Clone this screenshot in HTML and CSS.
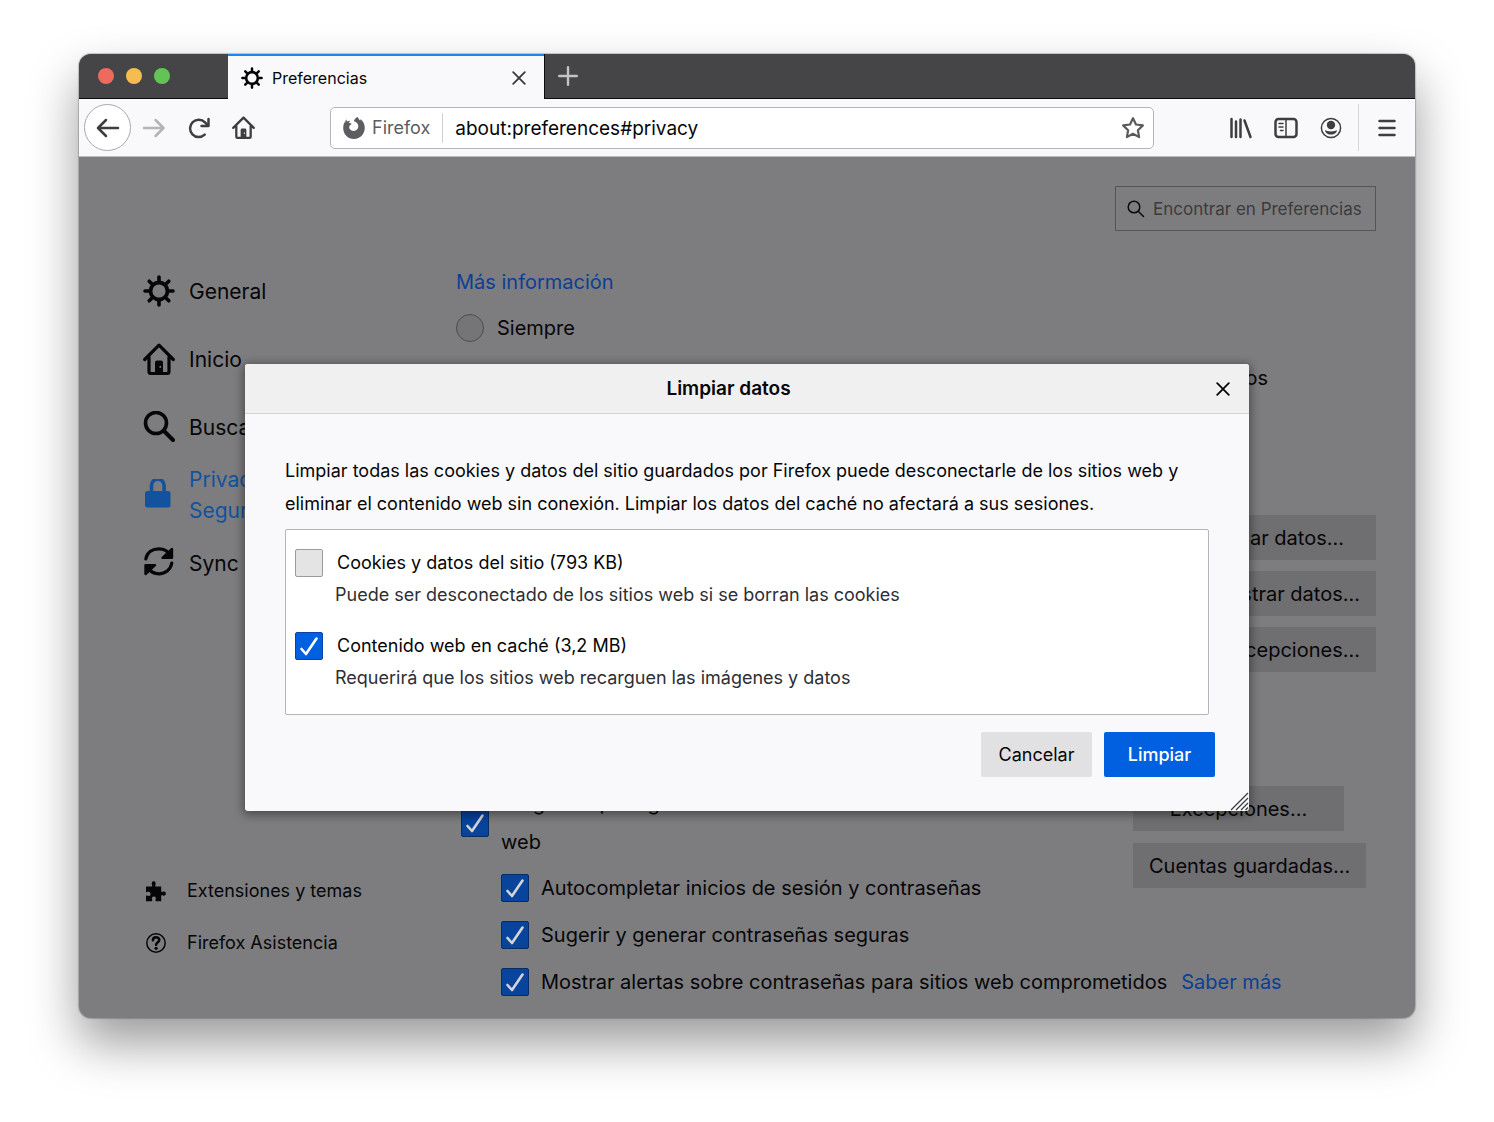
FILE: index.html
```html
<!DOCTYPE html>
<html lang="es">
<head>
<meta charset="utf-8">
<meta name="viewport" content="width=device-width, initial-scale=1">
<title>Preferencias</title>
<link rel="stylesheet" href="styles.css">
</head>
<body>
<svg class="defs" aria-hidden="true">
  <symbol id="gear" viewBox="0 0 32 32">
    <g fill="none" stroke="currentColor" stroke-linecap="round">
      <circle cx="16" cy="16" r="8.5" stroke-width="3.8"/>
      <path stroke-width="3.6" d="M16 2v4M16 26v4M2 16h4M26 16h4M6.2 6.2l2.6 2.6M23.2 23.2l2.6 2.6M6.2 25.8l2.6-2.6M23.2 8.8l2.6-2.6"/>
    </g>
  </symbol>
  <symbol id="home" viewBox="0 0 32 32">
    <path fill="none" stroke="currentColor" stroke-width="3.2" stroke-linecap="round" stroke-linejoin="round" d="M1.7 16.5L16 2.200l14.300 14.300M6 14v14.500q0 2 2 2h16q2 0 2-2V14"/>
    <path fill="currentColor" fill-rule="evenodd" d="M12 30V19.500q0-2 2-2h4q2 0 2 2V30zM16.500 23h1.600v1.800h-1.600z"/>
  </symbol>
  <symbol id="close" viewBox="0 0 14 14">
    <path fill="none" stroke="currentColor" stroke-width="1.800" stroke-linecap="round" d="M1.200 1.200l11.600 11.600M12.800 1.200L1.200 12.800"/>
  </symbol>
</svg>

<div class="window">
  <div class="tabbar">
    <div class="lights"><i class="light red"></i><i class="light yellow"></i><i class="light green"></i></div>
    <div class="tab">
      <svg class="tab-icon"><use href="#gear"/></svg>
      <span class="tab-title">Preferencias</span>
      <button class="plain tab-close" aria-label="Cerrar pestaña"><svg class="x-icon"><use href="#close"/></svg></button>
    </div>
    <button class="plain new-tab" aria-label="Nueva pestaña"><svg width="20" height="20" viewBox="0 0 20 20"><path fill="none" stroke="currentColor" stroke-width="2.400" stroke-linecap="round" d="M10 1.200v17.600M1.200 10h17.600"/></svg></button>
  </div>

  <div class="toolbar">
    <button class="plain tool back" aria-label="Atrás"><svg width="24" height="24" viewBox="0 0 24 24"><path d="M22 12H3M10 4L2 12l8 8"/></svg></button>
    <button class="plain tool forward" aria-label="Adelante"><svg width="24" height="24" viewBox="0 0 24 24"><path d="M2 12h19M13.500 4l8 8-8 8"/></svg></button>
    <button class="plain tool" aria-label="Recargar"><svg width="24" height="24" viewBox="0 0 24 24"><path d="M17.700 18.700A8.700 8.700 0 1 1 18 6.300l2.500 2.500"/><path d="M21.500 3v7h-7"/></svg></button>
    <button class="plain tool" aria-label="Inicio"><svg width="23" height="23"><use href="#home"/></svg></button>
    <div class="urlbar">
      <svg class="brand" width="24" height="24" viewBox="0 0 24 24"><path fill="currentColor" d="M4.300 3.200c.1 1 .4 1.700 1 2.300.8-.7 2-1 3-.8-.8.600-1.200 1.300-1.200 2.200.7.200 1.600.2 2.400.5-.1 1-1 1.500-1.800 2-.7 1.100-.6 2.700.3 3.800 1.900 2.400 5.700 2.200 7.400-.2 1.700-2.500.9-5.600-1.600-7.100-.7-.4-1.300-.6-2-.6.700-2.200 2.100-3.700 4.100-4.300.3 1.500 1.200 2.500 2.300 3.600.3-.4.300-.9.200-1.500 2.700 2.100 4.400 5.200 4.400 8.700C22.800 18 18.200 23 12 23S1.200 18.200 1.200 12c0-2.200.5-4.100 1.500-5.900l.3 1c.1-1.500.5-2.800 1.300-3.900z"/></svg>
      <span class="brand-name">Firefox</span>
      <input class="address" type="text" value="about:preferences#privacy" aria-label="Dirección">
      <button class="plain star" aria-label="Añadir a marcadores"><svg width="24" height="24" viewBox="0 0 24 24"><path fill="none" stroke="currentColor" stroke-width="2.200" stroke-linejoin="round" d="M12 2.200l3 6.300 6.900.9-5 4.800 1.200 6.900L12 17.800l-6.100 3.300 1.200-6.900-5-4.800 6.900-.9z"/></svg></button>
    </div>
    <button class="plain tool" aria-label="Biblioteca"><svg width="24" height="24" viewBox="0 0 24 24"><path d="M2.500 3v18M7 5.500V21M11.500 3.500V21M15.500 4.500L21.500 21"/></svg></button>
    <button class="plain tool" aria-label="Barra lateral"><svg width="24" height="24" viewBox="0 0 24 24"><rect x="1.500" y="3" width="21" height="18" rx="3"/><path class="thin" d="M12 3v18M5 7.500h4M5 11h4M6.500 14.500H9"/></svg></button>
    <button class="plain tool" aria-label="Cuenta"><svg width="22" height="22" viewBox="0 0 22 22"><circle class="thin" cx="11" cy="11" r="9.600"/><circle class="solid" cx="11" cy="8" r="4.200"/><path class="solid" d="M5 13.200c1 .1 3 1.300 6 1.300s5-1.200 6-1.300c0 2-2.400 4.300-6 4.300s-6-2.300-6-4.300z"/></svg></button>
    <button class="plain tool menu" aria-label="Menú"><svg width="18" height="18" viewBox="0 0 18 18"><path d="M1.500 2h15M1.500 9h15M1.500 16h15"/></svg></button>
  </div>

  <div class="page">
    <nav class="sidebar">
      <a class="category" href="#general"><svg class="cat-icon"><use href="#gear"/></svg><span>General</span></a>
      <a class="category" href="#home-pane"><svg class="cat-icon"><use href="#home"/></svg><span>Inicio</span></a>
      <a class="category" href="#search"><svg class="cat-icon" viewBox="0 0 32 32"><g fill="none" stroke="currentColor" stroke-linecap="round"><circle cx="13" cy="12" r="10.500" stroke-width="3.600"/><path stroke-width="4" d="M21 20l9 9"/></g></svg><span>Buscar</span></a>
      <a class="category selected" href="#privacy"><svg class="cat-icon" viewBox="0 0 32 32"><path fill="none" stroke="currentColor" stroke-width="3.600" d="M8.500 14V6.500a6.300 6.300 0 0 1 12.600 0V14"/><rect fill="currentColor" x="2" y="12" width="25.500" height="16.500" rx="2.500"/></svg><span>Privacidad y<br>Seguridad</span></a>
      <a class="category" href="#sync"><svg class="cat-icon" viewBox="0 0 32 32"><g fill="none" stroke="currentColor" stroke-width="3.200" stroke-linecap="round" stroke-linejoin="round"><path d="M2.800 12C4 5 9.500 1.800 16 1.800c5 0 9 2.700 11 6.200"/><path d="M28.800 16C27.600 23 22 26.800 16 26.800c-5 0-9-2.700-11-6.200"/><path d="M29 2v8.800h-9.500zM2.500 27v-8.800H12z" fill="currentColor" stroke-width="2.400"/></g></svg><span>Sync</span></a>
      <div class="sidebar-foot">
        <a class="support" href="#addons"><svg width="22" height="22" viewBox="0 0 22 22"><path fill="currentColor" d="M1 6.500h5.500q1 0 .7-1C6.300 3.600 6.700 1.200 8.700 1.200s2.400 2.400 1.500 4.300q-.3 1 .7 1h5.300v4.700q0 1 1 .7c1.700-.9 3.700-.4 3.700 1.700s-2 2.600-3.700 1.700q-1-.3-1 .7v5.300h-5q-1 0-.7-1c1-1.800.3-3.700-1.600-3.700s-2.600 1.900-1.600 3.700q.3 1-.7 1H1v-5q0-1 1-.7c1.700 1 3.600.3 3.600-1.600S3.700 11.100 2 12.100q-1 .3-1-.7z"/></svg><span>Extensiones y temas</span></a>
        <a class="support" href="#help"><svg width="22" height="22" viewBox="0 0 22 22"><g fill="none" stroke="currentColor"><circle cx="11" cy="11" r="9.200" stroke-width="1.500"/><path stroke-width="2.500" stroke-linecap="round" d="M7.900 8.300c0-4.200 6.400-4 6.400-.3 0 2.200-3.200 2.200-3.200 4.800"/></g><circle fill="currentColor" cx="11.100" cy="16.300" r="1.600"/></svg><span>Firefox Asistencia</span></a>
      </div>
    </nav>

    <main class="content">
      <label class="search"><svg width="18" height="18" viewBox="0 0 18 18"><g fill="none" stroke="#0c0c0d" stroke-width="1.500" stroke-linecap="round"><circle cx="7" cy="7" r="5.800"/><path d="M11.200 11.200l5.300 5.300"/></g></svg><input type="text" placeholder="Encontrar en Preferencias" aria-label="Encontrar en Preferencias"></label>

      <section class="tracking">
        <a class="link" href="#more">Más información</a>
        <label class="option"><input class="radio" type="radio" name="dnt"><span>Siempre</span></label>
        <label class="option"><input class="radio" type="radio" name="dnt"><span>Solo cuando Firefox esté configurado para bloquear a los rastreadores conocidos</span></label>
      </section>

      <section class="site-data">
        <button class="btn clear">Limpiar datos...</button>
        <button class="btn">Administrar datos...</button>
        <button class="btn">Administrar excepciones...</button>
      </section>

      <section class="logins">
        <div class="login-options">
          <label class="ask"><input class="check" type="checkbox" checked><span>Preguntar para guardar contraseñas de sitios<br>web</span></label>
          <label class="sub"><input class="check" type="checkbox" checked><span>Autocompletar inicios de sesión y contraseñas</span></label>
          <label class="sub"><input class="check" type="checkbox" checked><span>Sugerir y generar contraseñas seguras</span></label>
        </div>
        <div class="login-buttons">
          <button class="btn">Excepciones...</button>
          <button class="btn saved">Cuentas guardadas...</button>
        </div>
        <div class="sub alerts"><label class="sub-label"><input class="check" type="checkbox" checked><span>Mostrar alertas sobre contraseñas para sitios web comprometidos</span></label><a class="link" href="#learn">Saber más</a></div>
      </section>
    </main>

    <div class="overlay">
      <div class="dialog" role="dialog" aria-labelledby="dialog-title">
        <header class="dialog-head">
          <h1 id="dialog-title">Limpiar datos</h1>
          <button class="plain dialog-close" aria-label="Cerrar"><svg class="x-icon"><use href="#close"/></svg></button>
        </header>
        <div class="dialog-body">
          <p class="intro">Limpiar todas las cookies y datos del sitio guardados por Firefox puede desconectarle de los sitios web y eliminar el contenido web sin conexión. Limpiar los datos del caché no afectará a sus sesiones.</p>
          <div class="choices">
            <div class="choice">
              <label><input class="check" type="checkbox"><span>Cookies y datos del sitio (793 KB)</span></label>
              <p>Puede ser desconectado de los sitios web si se borran las cookies</p>
            </div>
            <div class="choice">
              <label><input class="check" type="checkbox" checked><span>Contenido web en caché (3,2 MB)</span></label>
              <p>Requerirá que los sitios web recarguen las imágenes y datos</p>
            </div>
          </div>
        </div>
        <footer class="dialog-foot">
          <button class="action">Cancelar</button>
          <button class="action primary">Limpiar</button>
        </footer>
        <svg class="grip" width="20" height="20" viewBox="0 0 20 20"><path fill="none" stroke="#3a3a3c" stroke-width="1.200" d="M2 19L19 2M7 19L19 7M12 19l7-7M16.500 19l2.500-2.500"/></svg>
      </div>
    </div>
  </div>
</div>
</body>
</html>
```
FILE: styles.css
```css
* { box-sizing: border-box; }

body {
  margin: 0;
  padding: 54px 79px 104px;
  background: #fff;
  color: #060607;
  font-family: Inter, "Liberation Sans", sans-serif;
  font-size: 20px;
  line-height: 30px;
}

button, input { font: inherit; color: inherit; }
a { color: inherit; text-decoration: none; }
p, h1 { margin: 0; }
svg { flex: none; display: block; }
.defs { position: absolute; width: 0; height: 0; }
.plain { border: 0; padding: 0; background: none; display: flex; align-items: center; justify-content: center; }

.window {
  border-radius: 12px;
  overflow: hidden;
  background: #7d7d7f;
  box-shadow: 0 0 1px 1px rgba(0, 0, 0, .2), 0 25px 50px rgba(0, 0, 0, .4);
}

/* Tab strip */
.tabbar { display: flex; height: 45px; background: #454547; }
.lights { display: flex; align-items: center; gap: 12px; width: 149px; padding-left: 19px; border-bottom: 1px solid #0c0c0d; }
.light { width: 16px; height: 16px; border-radius: 50%; }
.red { background: #ee6a5f; }
.yellow { background: #f5bd4f; }
.green { background: #61c454; }
.tab { display: flex; align-items: center; width: 316px; padding: 0 16px 0 13px; background: #f9f9fb; border-top: 2px solid #1f84e8; }
.tab-icon { width: 22px; height: 22px; }
.tab-title { flex: 1; padding-left: 9px; font-size: 16px; }
.x-icon { width: 14px; height: 14px; }
.tab-close { width: 18px; height: 18px; color: #38383d; }
.new-tab { flex: 1; justify-content: flex-start; padding-left: 13px; color: #c4c4c6; border-left: 1px solid #0c0c0d; border-bottom: 1px solid #0c0c0d; }

/* Navigation toolbar */
.toolbar { display: flex; align-items: center; height: 58px; padding-left: 5px; background: #f9f9fb; border-bottom: 1px solid #bdbdbf; color: #3e3e42; }
.tool { width: 45px; height: 47px; flex: none; }
.tool svg { fill: none; stroke: currentColor; stroke-width: 2.5px; stroke-linecap: round; stroke-linejoin: round; }
.tool use { stroke: none; }
.tool .thin { stroke-width: 1.5px; }
.tool .solid { fill: currentColor; stroke: none; }
.back { width: 47px; border: 1px solid #a9a9ad; border-radius: 50%; background: #fff; }
.forward { color: #b4b4b8; }
.menu { width: 57px; margin-left: 5px; border-left: 1px solid #d7d7db; }
.urlbar { flex: 1; display: flex; align-items: center; height: 42px; margin: 0 64px; padding: 0 8px 0 11px; border: 1px solid #b5b5b9; border-radius: 5px; background: #fff; }
.brand { color: #5d5d61; }
.brand-name { padding: 0 12px 0 6px; font-size: 18px; color: #5d5d61; border-right: 1px solid #d0d0d4; }
.address { flex: 1; min-width: 0; height: 32px; padding: 2px 12px 0; border: 0; outline: 0; background: none; font-size: 19px; color: #060607; }
.star { color: #5a5a5e; }

/* Preferences page */
.page { position: relative; display: flex; padding: 29px 39px 21px 64px; }
.sidebar { display: flex; flex-direction: column; width: 313px; flex: none; padding: 71px 0 28px; }
.category { display: flex; align-items: center; gap: 14px; height: 68px; line-height: 31px; font-size: 21px; }
.cat-icon { width: 32px; height: 32px; }
.selected { color: #12529f; }
.sidebar-foot { margin-top: auto; }
.support { display: flex; align-items: center; gap: 20px; height: 52px; padding-left: 2px; font-size: 18px; }

.content { flex: 1; min-width: 0; }
.search { display: flex; align-items: center; gap: 8px; width: 261px; height: 45px; margin-left: auto; padding: 0 11px; border: 1px solid #555557; }
.search input { flex: 1; min-width: 0; padding: 0; border: 0; outline: 0; background: none; font-size: 17px; }
.search input::placeholder { color: #3b3b3d; opacity: 1; }
.link { color: #0c3f94; }

.tracking { display: grid; grid-template-rows: 26px 30px 30px; justify-items: start; row-gap: 20px; padding-top: 36px; }
.option { display: flex; align-items: center; gap: 13px; white-space: nowrap; }
.radio, .check { appearance: none; flex: none; width: 28px; height: 28px; margin: 0; border: 1px solid #4c4c4e; background: #757577; }
.radio { border-radius: 50%; }
.check { border-radius: 2px; }
.check:checked { border-color: #062c66; background: #08439c url("data:image/svg+xml,%3Csvg xmlns='http://www.w3.org/2000/svg' viewBox='0 0 26 26'%3E%3Cpath fill='none' stroke='%23d4d4d6' stroke-width='2.600' stroke-linecap='round' stroke-linejoin='round' d='M5.500 16l4.500 5L20.500 5.500'/%3E%3C/svg%3E"); }

.btn { height: 45px; padding: 0 16px; border: 0; background: #6f6f71; white-space: nowrap; }
.site-data { display: flex; flex-direction: column; align-items: flex-end; gap: 11px; padding-top: 122px; }
.clear { padding: 0 32px; }

.logins { display: grid; grid-template-columns: 1fr 243px; padding-top: 112px; }
.login-options { display: flex; flex-direction: column; gap: 17px; }
.login-buttons { display: flex; flex-direction: column; align-items: flex-start; gap: 12px; padding-top: 2px; }
.login-buttons .btn { width: 211px; }
.login-buttons .saved { width: auto; }
.ask { display: flex; align-items: center; gap: 12px; padding-left: 5px; margin-bottom: -6px; line-height: 39px; }
.sub, .sub-label { display: flex; align-items: center; gap: 12px; white-space: nowrap; }
.sub { padding-left: 45px; }
.alerts { grid-column: 1 / -1; gap: 14px; padding-top: 17px; }

/* Modal dialog */
.overlay { position: absolute; inset: 0; display: grid; place-items: center; }
.dialog { position: relative; width: 80%; max-width: 1004px; border-radius: 3px; background: #f9f9fb; box-shadow: 0 2px 10px 2px rgba(0, 0, 0, .4); font-size: 18px; }
.dialog-head { display: flex; align-items: center; height: 50px; border-bottom: 1px solid #d2d2d4; border-radius: 3px 3px 0 0; background: #f0f0f1; }
.dialog-head h1 { flex: 1; text-align: center; font-size: 19px; font-weight: 600; }
.dialog-close { width: 22px; height: 22px; margin-right: 15px; }
.dialog-body { padding: 40px 40px 0; }
.intro { line-height: 33px; }
.choices { display: flex; flex-direction: column; gap: 19px; margin-top: 9px; padding: 18px 9px 19px; border: 1px solid #b5b5b9; border-radius: 2px; background: #fff; }
.choice label { display: flex; align-items: center; gap: 14px; }
.choice p { padding-left: 40px; line-height: 34px; color: #2e2e33; }
.dialog .check { border-color: #9b9b9f; background-color: #e4e4e5; }
.dialog .check:checked { border-color: #0a44a8; background: #0060df url("data:image/svg+xml,%3Csvg xmlns='http://www.w3.org/2000/svg' viewBox='0 0 26 26'%3E%3Cpath fill='none' stroke='%23fff' stroke-width='2.600' stroke-linecap='round' stroke-linejoin='round' d='M5.500 16l4.500 5L20.500 5.500'/%3E%3C/svg%3E"); }
.dialog-foot { display: flex; justify-content: flex-end; gap: 12px; padding: 17px 34px 34px; }
.action { width: 111px; height: 45px; padding: 0; border: 0; border-radius: 2px; background: #e1e1e3; }
.primary { background: #0060df; color: #fff; font-weight: 500; }
.grip { position: absolute; right: 0; bottom: 0; }
```
